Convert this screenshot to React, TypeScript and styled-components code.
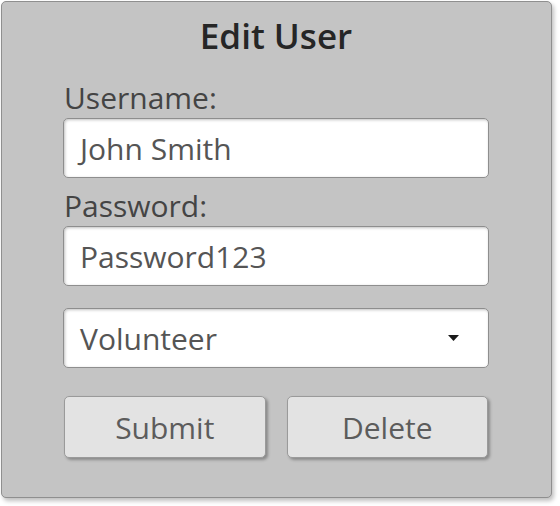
import React from "react";
import styled, { createGlobalStyle } from "styled-components";

const Global = createGlobalStyle`
  html, body { margin: 0; padding: 0; background: #ffffff; }
  body { font-family: "Open Sans", "Liberation Sans", sans-serif; }
  * { box-sizing: border-box; }
`;

const Page = styled.div`
  width: 560px;
  height: 506px;
  padding: 1px 8px 8px 1px;
`;

const Panel = styled.div`
  width: 551px;
  height: 497px;
  background: #c4c4c4;
  border: 1px solid #8f8f8f;
  border-radius: 5px;
  box-shadow: 2px 3px 4px rgba(0, 0, 0, 0.25);
  display: flex;
  flex-direction: column;
  padding: 11px 62px 0 61px;
`;

const Title = styled.h1`
  margin: 0;
  font-size: 35px;
  font-weight: 600;
  color: #262626;
  text-align: center;
  line-height: 46px;
`;

const Label = styled.label`
  display: block;
  font-size: 30px;
  color: #444444;
  line-height: 36px;
  padding-left: 1px;
`;

const Field = styled.div<{ $mt: number }>`
  margin-top: ${(p) => p.$mt}px;
  height: 60px;
  background: #ffffff;
  border: 1px solid #8e8e8e;
  border-radius: 5px;
  box-shadow: inset 1px 1px 3px rgba(0, 0, 0, 0.25);
  display: flex;
  align-items: center;
  padding: 0 16px;
  font-size: 30px;
  color: #555555;
`;

const SelectText = styled.span`
  flex: 1;
`;

const Arrow = styled.svg`
  width: 11px;
  height: 6px;
  margin-right: 13px;
`;

const Buttons = styled.div`
  display: flex;
  gap: 21px;
  margin-top: 28px;
  padding-right: 1px;
  padding-left: 1px;
`;

const Button = styled.button`
  flex: 1;
  height: 62px;
  background: #e3e3e3;
  border: 1px solid #9a9a9a;
  border-radius: 5px;
  box-shadow: 2px 2px 3px rgba(0, 0, 0, 0.3);
  font-family: "Open Sans", "Liberation Sans", sans-serif;
  font-size: 30px;
  color: #5c5c5c;
  padding: 0;
`;

const Group = styled.div<{ $mt: number }>`
  margin-top: ${(p) => p.$mt}px;
`;

export default function App() {
  return (
    <Page>
      <Global />
      <Panel>
        <Title>Edit User</Title>
        <Group $mt={21}>
          <Label>Username:</Label>
          <Field $mt={2}>John Smith</Field>
        </Group>
        <Group $mt={10}>
          <Label>Password:</Label>
          <Field $mt={2}>Password123</Field>
        </Group>
        <Field $mt={22}>
          <SelectText>Volunteer</SelectText>
          <Arrow viewBox="0 0 11 6">
            <path d="M0 0 L11 0 L5.5 6 Z" fill="#1a1a1a" />
          </Arrow>
        </Field>
        <Buttons>
          <Button>Submit</Button>
          <Button>Delete</Button>
        </Buttons>
      </Panel>
    </Page>
  );
}
